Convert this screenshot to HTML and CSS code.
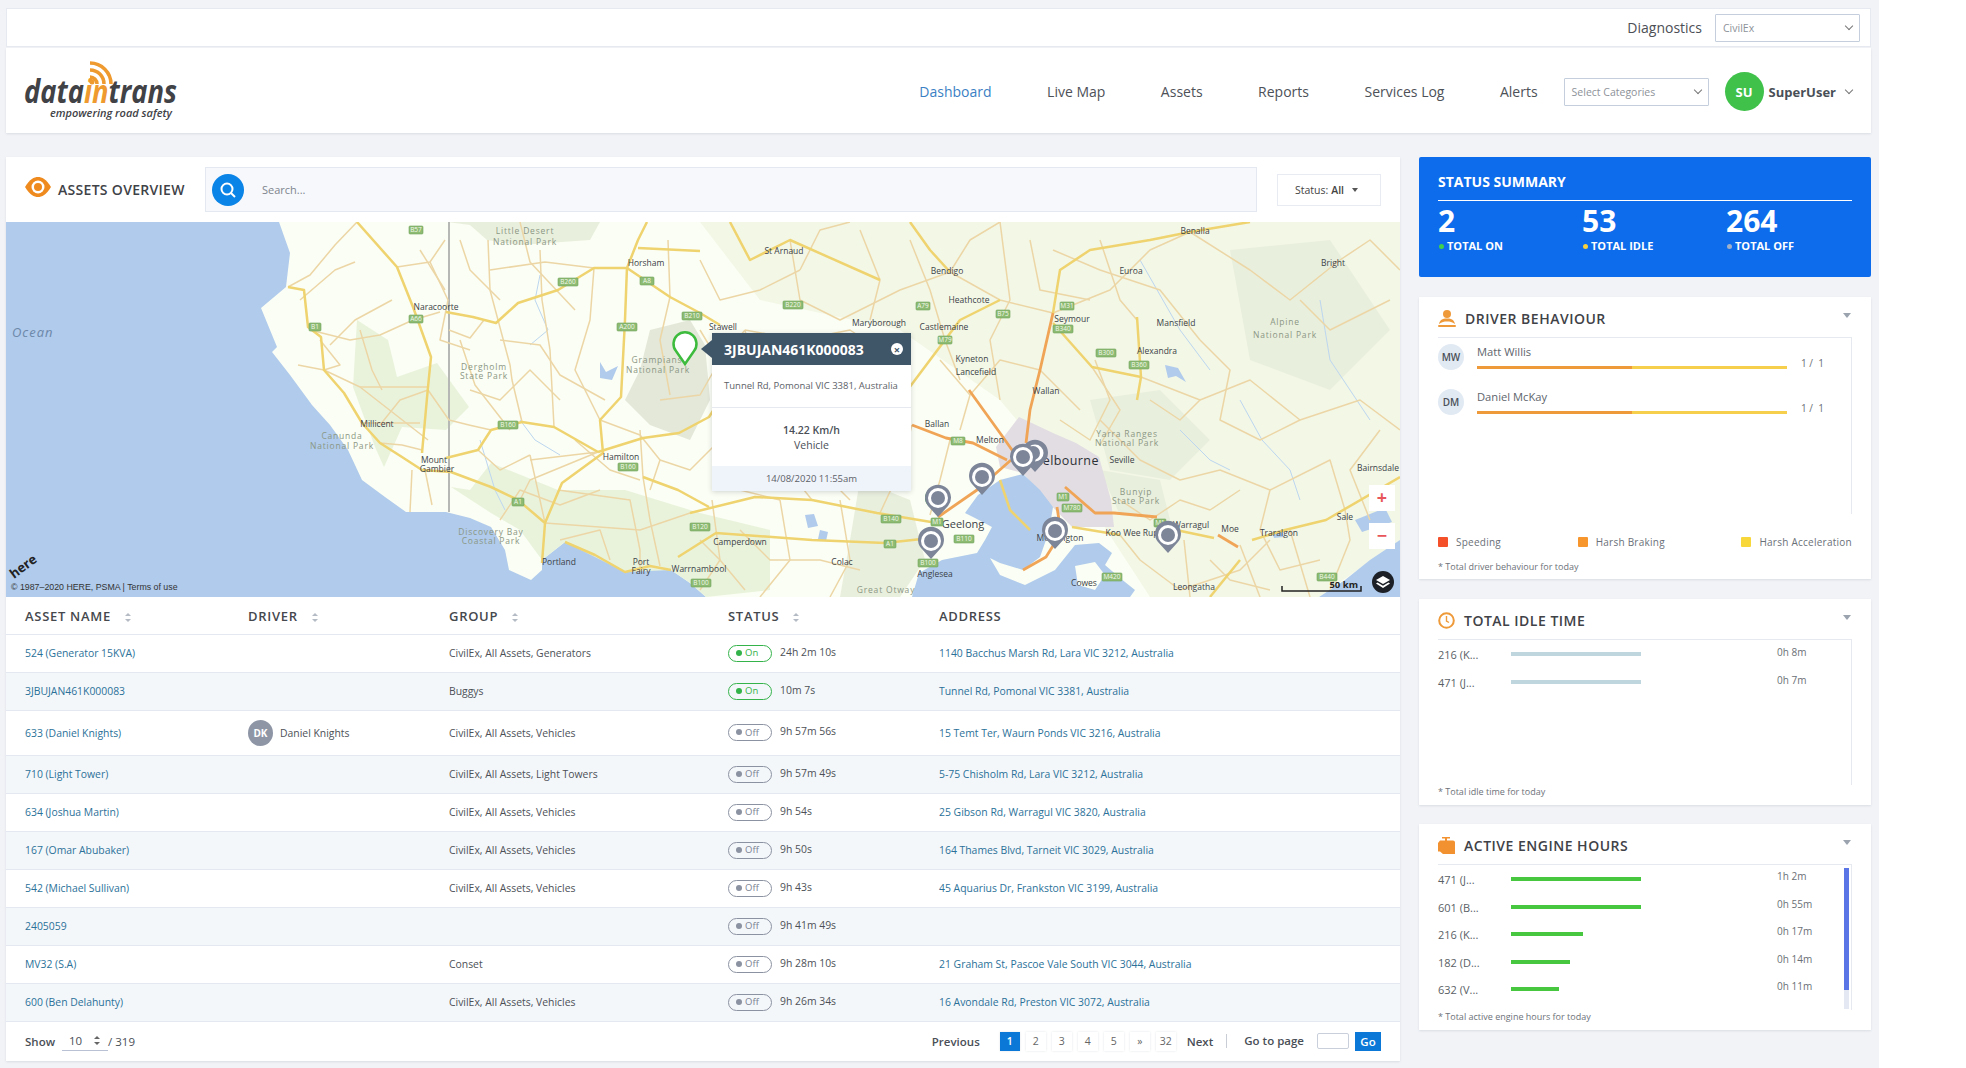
FILE: index.html
```html
<!DOCTYPE html>
<html lang="en">
<head>
    <meta charset="UTF-8">
    <title>Dataintrans Dashboard</title>
    <link rel="stylesheet" href="styles.css">
</head>
<body>
<div class="page">

    <div class="topbar">
        <span class="diag">Diagnostics</span>
        <div class="selectbox company">CivilEx<i class="chev"></i></div>
    </div>

    <div class="navbar">
        <svg class="logo" width="160" height="62" viewBox="0 0 160 62">
            <g class="wifi">
                <path d="M66 17a7 7 0 0 1 7 7"/>
                <path d="M66 10a14 14 0 0 1 14 14"/>
                <path d="M66 3a21 21 0 0 1 21 21"/>
            </g>
            <circle cx="68" cy="22" r="2.5" fill="#ee9a2e"/>
            <text class="logo-word" x="0" y="43" textLength="153" lengthAdjust="spacingAndGlyphs">data<tspan fill="#ee9a2e">in</tspan>trans</text>
            <text class="logo-tag" x="26" y="57" textLength="122" lengthAdjust="spacingAndGlyphs">empowering road safety</text>
        </svg>
        <nav class="nav">
            <a class="active">Dashboard</a>
            <a>Live Map</a>
            <a>Assets</a>
            <a>Reports</a>
            <a>Services Log</a>
            <a>Alerts</a>
        </nav>
        <div class="selectbox cats">Select Categories<i class="chev"></i></div>
        <div class="avatar">SU</div>
        <span class="username">SuperUser</span>
        <i class="chev user-chev"></i>
    </div>

    <div class="main">
        <div class="overview">
            <div class="ov-head">
                <svg class="ov-eye" width="26" height="20" viewBox="0 0 26 20">
                    <path d="M0 10C5 2 9 0 13 0s8 2 13 10c-5 8-9 10-13 10S5 18 0 10z" fill="#ee8a1e"/>
                    <circle cx="13" cy="10" r="6.5" fill="#fff"/>
                    <circle cx="13" cy="10" r="4" fill="#ee8a1e"/>
                </svg>
                <h2 class="ov-title">ASSETS OVERVIEW</h2>
                <div class="search">
                    <span class="search-btn">
                        <svg width="18" height="18" viewBox="0 0 18 18" fill="none" stroke="#fff" stroke-width="2">
                            <circle cx="8" cy="8" r="5.5"/><path d="M12 12l4 4"/>
                        </svg>
                    </span>
                    <span class="search-text">Search...</span>
                </div>
                <div class="status-filter">Status: <b>All</b><i class="caret"></i></div>
            </div>

            <div class="map">
                <svg class="map-svg" width="1394" height="375" viewBox="6 222 1394 375">
                    <rect class="sea" x="6" y="222" width="1394" height="375"/>
                    <path class="land" d="M279,222 290,253 286,287 261,308 277,347 272,352 290,375 312,405 330,425 348,450 362,480 385,497 406,512 446,512 470,518 491,527 505,550 509,570 531,580 542,570 542,560 565,542 595,555 625,572 650,566 671,570 690,583 706,597 1400,597 1400,222Z"/>

                    <path class="east" d="M700,222H1400V540L1319,597H1150L1100,520 1000,400 900,330 760,300Z"/>
                    <path class="park" d="M357,320 388,340 397,377 437,363 469,407 446,430 402,427 384,467 375,447 353,387Z"/>
                    <path class="park" d="M491,463 558,490 625,490 700,513 770,530 770,590 706,597 690,583 671,570 625,572 565,542 542,560 520,530 491,513 451,487 470,490Z"/>
                    <path class="reserve" d="M447,222H600L590,240 520,245 487,240 470,225Z"/>
                    <path class="reserve dark" d="M650,330 690,320 705,345 710,400 690,440 650,425 625,400 640,370Z"/>
                    <path class="reserve" d="M860,480 910,500 925,560 900,597H840L850,540Z"/>
                    <path class="reserve" d="M1090,400 1160,390 1210,440 1170,480 1110,470Z"/>
                    <path class="reserve" d="M1230,250 1330,240 1390,330 1330,390 1250,360Z"/>
                    <path class="reserve" d="M1100,470 1160,480 1170,520 1120,515Z"/>
                    <path class="urban" d="M996,447 1019,417 1053,433 1076,443 1099,457 1111,500 1114,527 1072,527 1046,500 1023,473 1000,467Z"/>

                    <path class="sea" d="M912,597 919,573 942,560 977,553 985,540 992,527 975,518 965,513 978,495 1000,480 1023,474 1040,490 1053,507 1050,525 1046,540 1040,557 1023,570 1000,563 990,558 1000,575 1025,585 1055,570 1075,545 1099,543 1112,553 1105,565 1120,578 1135,590 1130,597Z"/>
                    <path class="sea" d="M1319,597 1345,580 1370,560 1400,540V597Z"/>
                    <path class="land" d="M1075,566 1095,562 1105,575 1095,590 1078,585Z"/>
                    <path class="sea" d="M1355,520 1385,508 1392,522 1362,532Z"/>
                    <path class="sea" d="M600,362 606,372 618,366 612,380 600,378Z"/>
                    <path class="sea" d="M805,515 814,514 818,526 808,528Z"/>
                    <path class="sea" d="M820,530 828,532 826,541 818,539Z"/>
                    <path class="sea" d="M1165,365 1178,368 1186,382 1176,376 1168,378Z"/>
                    <path class="sea" d="M1272,532 1282,530 1284,537 1274,538Z"/>

                    <g class="river">
                        <path d="M540,275 535,300 548,330 530,345"/>
                        <path d="M1240,400 1262,440 1290,470 1300,500"/>
                        <path d="M1180,430 1210,460 1230,470"/>
                        <path d="M1320,300 1330,360 1370,420"/>
                        <path d="M520,420 535,440 560,455"/>
                        <path d="M480,440 495,490 505,510"/>
                        <path d="M1140,260 1180,330 1210,370"/>
                    </g>

                    <line class="border" x1="449" y1="222" x2="449" y2="512"/>

                    <g class="rd-t">
                        <path d="M357,222 335,245 310,275 288,287"/>
                        <path d="M310,330 350,340 380,335 413,320 440,312"/>
                        <path d="M320,340 340,365 324,370 298,365"/>
                        <path d="M324,370 360,387 428,440"/>
                        <path d="M360,330 372,370 382,390"/>
                        <path d="M360,387H428"/>
                        <path d="M380,425 400,400 428,390 449,420 469,425 491,430"/>
                        <path d="M362,423H420"/>
                        <path d="M380,443 402,445 422,450"/>
                        <path d="M412,470 410,512"/>
                        <path d="M425,470 432,505"/>
                        <path d="M449,330 470,338 484,320"/>
                        <path d="M460,340 475,385 510,430"/>
                        <path d="M488,240 490,290 510,365 512,380 522,422"/>
                        <path d="M500,340 540,345 560,375 605,400"/>
                        <path d="M540,250 542,300 550,350 554,427"/>
                        <path d="M490,270 545,262 594,268"/>
                        <path d="M594,268 590,320 575,370 600,420"/>
                        <path d="M530,460 598,452 530,480 520,500"/>
                        <path d="M530,455 540,500 545,523"/>
                        <path d="M558,490 630,500 640,550 640,572"/>
                        <path d="M640,430 643,477 650,520 660,566"/>
                        <path d="M545,523 640,530 690,513"/>
                        <path d="M600,420 640,435 660,460 650,490"/>
                        <path d="M660,400 700,395 720,360 745,330"/>
                        <path d="M668,240 670,297 660,340 670,395"/>
                        <path d="M700,260 720,300 760,290 800,270"/>
                        <path d="M745,330 800,340 850,330 880,350"/>
                        <path d="M745,330 760,400 780,460 812,500"/>
                        <path d="M712,500 720,560 745,590"/>
                        <path d="M780,500 790,560 760,597"/>
                        <path d="M840,500 850,560 830,597"/>
                        <path d="M790,240 800,300 840,320 900,290 950,272"/>
                        <path d="M910,240 930,290 945,340 960,380"/>
                        <path d="M950,272 1000,300 1053,313 1110,290 1150,250 1190,232"/>
                        <path d="M1000,222 1010,300 990,340 1000,400"/>
                        <path d="M912,425 900,470 880,513"/>
                        <path d="M950,440 940,480 930,515"/>
                        <path d="M1100,240 1120,300 1137,320"/>
                        <path d="M1190,232 1250,270 1290,300 1340,260"/>
                        <path d="M1141,377 1200,400 1250,380 1300,420 1360,400 1400,430"/>
                        <path d="M1100,420 1140,460 1180,480 1220,470 1270,490 1330,460 1345,510"/>
                        <path d="M1120,535 1140,560 1180,590 1240,570 1270,540"/>
                        <path d="M1184,540 1190,597"/>
                        <path d="M1240,545 1260,597"/>
                        <path d="M1290,530 1310,597"/>
                        <path d="M1060,420 1090,440 1110,400 1095,360"/>
                        <path d="M1345,510 1350,540 1330,590"/>
                        <path d="M300,300 335,270 355,262"/>
                        <path d="M330,345 355,320 392,300"/>
                        <path d="M397,267 430,262 445,240"/>
                        <path d="M430,262 448,300 440,340 470,350"/>
                        <path d="M420,250 445,290"/>
                        <path d="M500,300 470,270 460,240"/>
                        <path d="M520,222 530,262 575,310"/>
                        <path d="M470,390 500,400 530,370 560,400"/>
                        <path d="M478,450 500,470 530,455"/>
                        <path d="M500,520 520,490 560,505 600,490"/>
                        <path d="M575,440 610,470 640,480"/>
                        <path d="M560,540 600,530 610,560"/>
                        <path d="M660,460 690,470 720,440 760,450"/>
                        <path d="M720,400 760,430 800,420 840,440 880,430"/>
                        <path d="M700,330 730,380 780,370 820,390 860,370 900,390"/>
                        <path d="M820,340 830,400 820,470 850,500"/>
                        <path d="M880,350 870,420 850,470"/>
                        <path d="M730,440 740,490 780,500"/>
                        <path d="M740,530 770,560 820,560 860,570"/>
                        <path d="M700,540 720,560 700,590"/>
                        <path d="M860,230 880,280 870,320"/>
                        <path d="M800,270 820,230 850,222"/>
                        <path d="M950,272 970,240 1000,222"/>
                        <path d="M1030,240 1040,290 1090,300"/>
                        <path d="M1053,250 1100,270 1160,290 1200,340"/>
                        <path d="M1200,340 1230,370 1220,420 1260,440 1300,420"/>
                        <path d="M1150,400 1180,420 1200,400"/>
                        <path d="M1300,300 1330,330 1390,300"/>
                        <path d="M1340,260 1370,240 1400,270"/>
                        <path d="M1380,430 1350,470 1370,520"/>
                        <path d="M1270,490 1260,530 1280,570 1320,560"/>
                        <path d="M1120,500 1150,520 1180,500 1210,510 1240,490"/>
                        <path d="M1210,560 1230,580 1270,590"/>
                        <path d="M970,395 1000,360 1040,370 1080,410"/>
                        <path d="M940,360 970,395 960,430"/>
                        <path d="M1092,367 1120,410 1100,445"/>
                    </g>
                    <g class="rd-y">
                        <path d="M357,222 397,267 413,307 431,357 428,387 422,453"/>
                        <path d="M288,287 304,290 308,327 321,337 324,370 344,393 362,423 380,443 402,457 422,470 451,472 491,487 518,500 545,523 542,563"/>
                        <path d="M446,458 478,450 491,430 522,422 554,427 598,452"/>
                        <path d="M545,523 562,483 603,453 600,420 621,397 625,320 627,267"/>
                        <path d="M446,312 473,317 496,323 518,303 558,290 594,268 627,268 638,240 647,222"/>
                        <path d="M627,268 670,297 700,313 720,325"/>
                        <path d="M638,248 700,251"/>
                        <path d="M565,542 595,555 625,572 650,566 671,570"/>
                        <path d="M598,452 643,438 679,433 709,417 720,400"/>
                        <path d="M643,477 678,490 709,507"/>
                        <path d="M690,513 755,497 812,500 877,513 931,522"/>
                        <path d="M678,557 716,533 812,540 885,543 931,538"/>
                        <path d="M1053,323 1092,367 1141,377"/>
                        <path d="M1137,317 1141,377 1137,400"/>
                        <path d="M1176,530 1214,538"/>
                        <path d="M1252,540 1285,530 1326,520 1400,477"/>
                        <path d="M1000,480 1010,510 1030,530"/>
                        <path d="M880,350 900,400 960,320 1000,300"/>
                        <path d="M1072,527 1120,535"/>
                        <path d="M1240,560 1210,597"/>
                        <path d="M730,222 750,260 790,240 880,280"/>
                        <path d="M1053,313 1060,270 1090,250 1150,240 1190,232 1250,222"/>
                        <path d="M950,272 930,250 910,222"/>
                    </g>
                    <g class="rd-o">
                        <path d="M912,425 946,438 973,443 1007,460"/>
                        <path d="M1053,313 1040,370 1030,410 1026,443"/>
                        <path d="M969,390 1000,433 1017,457"/>
                        <path d="M938,517 977,490 1011,460"/>
                        <path d="M1065,487 1095,513 1114,513 1157,517"/>
                        <path d="M1023,570 1046,557 1061,533 1057,507"/>
                        <path d="M1218,535 1238,547"/>
                    </g>

                    <g class="ml">
                        <text x="646" y="266">Horsham</text>
                        <text x="436" y="310">Naracoorte</text>
                        <text x="377" y="427">Millicent</text>
                        <text x="434" y="463">Mount</text>
                        <text x="437" y="472">Gambier</text>
                        <text x="621" y="460">Hamilton</text>
                        <text x="559" y="565">Portland</text>
                        <text x="641" y="565">Port</text>
                        <text x="641" y="574">Fairy</text>
                        <text x="699" y="572">Warrnambool</text>
                        <text x="723" y="330">Stawell</text>
                        <text x="879" y="326">Maryborough</text>
                        <text x="944" y="330">Castlemaine</text>
                        <text x="972" y="362">Kyneton</text>
                        <text x="976" y="375">Lancefield</text>
                        <text x="1072" y="322">Seymour</text>
                        <text x="1176" y="326">Mansfield</text>
                        <text x="1157" y="354">Alexandra</text>
                        <text x="1046" y="394">Wallan</text>
                        <text x="937" y="427">Ballan</text>
                        <text x="990" y="443">Melton</text>
                        <text x="1122" y="463">Seville</text>
                        <text x="740" y="545">Camperdown</text>
                        <text x="842" y="565">Colac</text>
                        <text x="1132" y="536">Koo Wee Rup</text>
                        <text x="1191" y="528">Warragul</text>
                        <text x="1230" y="532">Moe</text>
                        <text x="1279" y="536">Traralgon</text>
                        <text x="1345" y="520">Sale</text>
                        <text x="1378" y="471">Bairnsdale</text>
                        <text x="1194" y="590">Leongatha</text>
                        <text x="1084" y="586">Cowes</text>
                        <text x="935" y="577">Anglesea</text>
                        <text x="1060" y="541">Mornington</text>
                        <text x="947" y="274">Bendigo</text>
                        <text x="969" y="303">Heathcote</text>
                        <text x="1195" y="234">Benalla</text>
                        <text x="1131" y="274">Euroa</text>
                        <text x="1333" y="266">Bright</text>
                        <text x="784" y="254">St Arnaud</text>
                    </g>
                    <g class="mp">
                        <text x="525" y="234">Little Desert</text>
                        <text x="525" y="245">National Park</text>
                        <text x="484" y="370">Dergholm</text>
                        <text x="484" y="379">State Park</text>
                        <text x="657" y="363">Grampians</text>
                        <text x="658" y="373">National Park</text>
                        <text x="342" y="439">Canunda</text>
                        <text x="342" y="449">National Park</text>
                        <text x="491" y="535">Discovery Bay</text>
                        <text x="491" y="544">Coastal Park</text>
                        <text x="1127" y="437">Yarra Ranges</text>
                        <text x="1127" y="446">National Park</text>
                        <text x="1136" y="495">Bunyip</text>
                        <text x="1136" y="504">State Park</text>
                        <text x="886" y="593">Great Otway</text>
                        <text x="1285" y="325">Alpine</text>
                        <text x="1285" y="338">National Park</text>
                    </g>
                    <text class="m-big" x="1065" y="465">Melbourne</text>
                    <text class="m-mid" x="963" y="528">Geelong</text>
                    <text class="m-ocean" x="12" y="337">Ocean</text>

                    <g class="shields">
                        <rect x="409" y="226" width="14" height="8"/>
                        <rect x="558" y="278" width="20" height="8"/>
                        <rect x="640" y="277" width="14" height="8"/>
                        <rect x="682" y="312" width="20" height="8"/>
                        <rect x="617" y="323" width="20" height="8"/>
                        <rect x="409" y="315" width="14" height="8"/>
                        <rect x="309" y="323" width="12" height="8"/>
                        <rect x="498" y="421" width="20" height="8"/>
                        <rect x="618" y="463" width="20" height="8"/>
                        <rect x="512" y="498" width="12" height="8"/>
                        <rect x="783" y="301" width="20" height="8"/>
                        <rect x="916" y="302" width="14" height="8"/>
                        <rect x="996" y="310" width="14" height="8"/>
                        <rect x="1060" y="302" width="14" height="8"/>
                        <rect x="1053" y="325" width="20" height="8"/>
                        <rect x="1096" y="349" width="20" height="8"/>
                        <rect x="1129" y="361" width="20" height="8"/>
                        <rect x="938" y="336" width="14" height="8"/>
                        <rect x="951" y="437" width="14" height="8"/>
                        <rect x="931" y="518" width="12" height="8"/>
                        <rect x="881" y="515" width="20" height="8"/>
                        <rect x="690" y="523" width="20" height="8"/>
                        <rect x="884" y="540" width="12" height="8"/>
                        <rect x="918" y="559" width="20" height="8"/>
                        <rect x="954" y="535" width="20" height="8"/>
                        <rect x="691" y="579" width="20" height="8"/>
                        <rect x="1057" y="493" width="12" height="8"/>
                        <rect x="1062" y="504" width="20" height="8"/>
                        <rect x="1102" y="573" width="20" height="8"/>
                        <rect x="1154" y="519" width="12" height="8"/>
                        <rect x="1317" y="573" width="20" height="8"/>
                    </g>
                    <g class="shield-text">
                        <text x="416" y="232">B57</text>
                        <text x="568" y="284">B260</text>
                        <text x="647" y="283">A8</text>
                        <text x="692" y="318">B210</text>
                        <text x="627" y="329">A200</text>
                        <text x="416" y="321">A66</text>
                        <text x="315" y="329">B1</text>
                        <text x="508" y="427">B160</text>
                        <text x="628" y="469">B160</text>
                        <text x="518" y="504">A1</text>
                        <text x="793" y="307">B220</text>
                        <text x="923" y="308">A79</text>
                        <text x="1003" y="316">B75</text>
                        <text x="1067" y="308">M31</text>
                        <text x="1063" y="331">B340</text>
                        <text x="1106" y="355">B300</text>
                        <text x="1139" y="367">B360</text>
                        <text x="945" y="342">M79</text>
                        <text x="958" y="443">M8</text>
                        <text x="937" y="524">M1</text>
                        <text x="891" y="521">B140</text>
                        <text x="700" y="529">B120</text>
                        <text x="890" y="546">A1</text>
                        <text x="928" y="565">B100</text>
                        <text x="964" y="541">B110</text>
                        <text x="701" y="585">B100</text>
                        <text x="1063" y="499">M1</text>
                        <text x="1072" y="510">M780</text>
                        <text x="1112" y="579">M420</text>
                        <text x="1160" y="525">M1</text>
                        <text x="1327" y="579">B440</text>
                    </g>

                    <g class="pin-green">
                        <path class="pin-shape" d="M685,364 676,351A11.5,11.5 0 1 1 694,351Z"/>
                        <circle cx="936" cy="498" r="11"/>
                    </g>
                    <g class="pin">
                        <path d="M1035,472 1025,461A13,13 0 1 1 1045,461Z"/>
                        <circle class="pin-ring" cx="1035" cy="453" r="8.5"/>
                        <circle class="pin-dot" cx="1033" cy="453" r="7"/>
                    </g>
                    <g class="pin">
                        <path d="M1023,476 1013,465A13,13 0 1 1 1033,465Z"/>
                        <circle class="pin-ring" cx="1023" cy="457" r="10"/>
                        <circle class="pin-dot" cx="1023" cy="457" r="7"/>
                    </g>
                    <g class="pin">
                        <path d="M982,495 972,484A13,13 0 1 1 992,484Z"/>
                        <circle class="pin-ring" cx="982" cy="477" r="10"/>
                        <circle class="pin-dot" cx="982" cy="477" r="7"/>
                    </g>
                    <g class="pin">
                        <path d="M938,517 928,506A13,13 0 1 1 948,506Z"/>
                        <circle class="pin-ring" cx="938" cy="498" r="10"/>
                        <circle class="pin-dot" cx="938" cy="498" r="7"/>
                    </g>
                    <g class="pin">
                        <path d="M931,559 921,548A13,13 0 1 1 941,548Z"/>
                        <circle class="pin-ring" cx="931" cy="541" r="10"/>
                        <circle class="pin-dot" cx="931" cy="541" r="7"/>
                    </g>
                    <g class="pin">
                        <path d="M1055,549 1045,538A13,13 0 1 1 1065,538Z"/>
                        <circle class="pin-ring" cx="1055" cy="531" r="10"/>
                        <circle class="pin-dot" cx="1055" cy="531" r="7"/>
                    </g>
                    <g class="pin">
                        <path d="M1168,553 1158,542A13,13 0 1 1 1178,542Z"/>
                        <circle class="pin-ring" cx="1168" cy="535" r="10"/>
                        <circle class="pin-dot" cx="1168" cy="535" r="7"/>
                    </g>

                    <text class="here" x="14" y="579" transform="rotate(-37 14 579)">here</text>
                    <text class="copyright" x="11" y="590">© 1987–2020 HERE, PSMA | Terms of use</text>
                    <path class="scale-bar" d="M1282,586V591H1361V586"/>
                    <text class="scale-text" x="1358" y="588">50 km</text>
                </svg>

                <div class="popup">
                    <div class="pop-head">
                        <span class="pop-title">3JBUJAN461K000083</span>
                        <span class="pop-close">×</span>
                    </div>
                    <div class="pop-addr">Tunnel Rd, Pomonal VIC 3381, Australia</div>
                    <div class="pop-body">
                        <b>14.22 Km/h</b>
                        <span>Vehicle</span>
                    </div>
                    <div class="pop-foot">14/08/2020 11:55am</div>
                </div>

                <div class="zoom-ctrl zoom-plus">+</div>
                <div class="zoom-ctrl zoom-minus">−</div>
                <div class="layers">
                    <svg width="14" height="12" viewBox="0 0 14 12" fill="#fff">
                        <path d="M7 0l7 4-7 4-7-4z"/>
                        <path d="M1.500 6.500L7 9.700l5.500-3.200L14 7.500 7 12 0 7.500z"/>
                    </svg>
                </div>
            </div>

            <table class="assets">
                <colgroup>
                    <col class="c-name"><col class="c-driver"><col class="c-group"><col class="c-status"><col>
                </colgroup>
                <thead>
                    <tr>
                        <th>ASSET NAME<i class="sort"></i></th>
                        <th>DRIVER<i class="sort"></i></th>
                        <th>GROUP<i class="sort"></i></th>
                        <th>STATUS<i class="sort"></i></th>
                        <th>ADDRESS</th>
                    </tr>
                </thead>
                <tbody>
                    <tr>
                        <td><a>524 (Generator 15KVA)</a></td><td></td><td>CivilEx, All Assets, Generators</td>
                        <td><span class="pill on"><i></i>On</span>24h 2m 10s</td>
                        <td><a>1140 Bacchus Marsh Rd, Lara VIC 3212, Australia</a></td>
                    </tr>
                    <tr>
                        <td><a>3JBUJAN461K000083</a></td><td></td><td>Buggys</td>
                        <td><span class="pill on"><i></i>On</span>10m 7s</td>
                        <td><a>Tunnel Rd, Pomonal VIC 3381, Australia</a></td>
                    </tr>
                    <tr class="tall">
                        <td><a>633 (Daniel Knights)</a></td>
                        <td><span class="driver"><span class="driver-av">DK</span>Daniel Knights</span></td>
                        <td>CivilEx, All Assets, Vehicles</td>
                        <td><span class="pill"><i></i>Off</span>9h 57m 56s</td>
                        <td><a>15 Temt Ter, Waurn Ponds VIC 3216, Australia</a></td>
                    </tr>
                    <tr>
                        <td><a>710 (Light Tower)</a></td><td></td><td>CivilEx, All Assets, Light Towers</td>
                        <td><span class="pill"><i></i>Off</span>9h 57m 49s</td>
                        <td><a>5-75 Chisholm Rd, Lara VIC 3212, Australia</a></td>
                    </tr>
                    <tr>
                        <td><a>634 (Joshua Martin)</a></td><td></td><td>CivilEx, All Assets, Vehicles</td>
                        <td><span class="pill"><i></i>Off</span>9h 54s</td>
                        <td><a>25 Gibson Rd, Warragul VIC 3820, Australia</a></td>
                    </tr>
                    <tr>
                        <td><a>167 (Omar Abubaker)</a></td><td></td><td>CivilEx, All Assets, Vehicles</td>
                        <td><span class="pill"><i></i>Off</span>9h 50s</td>
                        <td><a>164 Thames Blvd, Tarneit VIC 3029, Australia</a></td>
                    </tr>
                    <tr>
                        <td><a>542 (Michael Sullivan)</a></td><td></td><td>CivilEx, All Assets, Vehicles</td>
                        <td><span class="pill"><i></i>Off</span>9h 43s</td>
                        <td><a>45 Aquarius Dr, Frankston VIC 3199, Australia</a></td>
                    </tr>
                    <tr>
                        <td><a>2405059</a></td><td></td><td></td>
                        <td><span class="pill"><i></i>Off</span>9h 41m 49s</td>
                        <td></td>
                    </tr>
                    <tr>
                        <td><a>MV32 (S.A)</a></td><td></td><td>Conset</td>
                        <td><span class="pill"><i></i>Off</span>9h 28m 10s</td>
                        <td><a>21 Graham St, Pascoe Vale South VIC 3044, Australia</a></td>
                    </tr>
                    <tr>
                        <td><a>600 (Ben Delahunty)</a></td><td></td><td>CivilEx, All Assets, Vehicles</td>
                        <td><span class="pill"><i></i>Off</span>9h 26m 34s</td>
                        <td><a>16 Avondale Rd, Preston VIC 3072, Australia</a></td>
                    </tr>
                </tbody>
            </table>

            <div class="table-foot">
                <b class="show">Show</b>
                <span class="per-page">10<i class="sort dark"></i></span>
                <span class="total">/ 319</span>
                <b class="prev">Previous</b>
                <span class="pages">
                    <span class="pg active">1</span>
                    <span class="pg">2</span>
                    <span class="pg">3</span>
                    <span class="pg">4</span>
                    <span class="pg">5</span>
                    <span class="pg">»</span>
                    <span class="pg">32</span>
                </span>
                <b class="next">Next</b>
                <b class="goto">Go to page</b>
                <span class="goto-input"></span>
                <span class="go">Go</span>
            </div>
        </div>

        <div class="side">
            <div class="summary">
                <h3 class="sum-title">STATUS SUMMARY</h3>
                <div class="sum-grid">
                    <div><strong>2</strong><span><i class="dot green"></i>TOTAL ON</span></div>
                    <div><strong>53</strong><span><i class="dot yellow"></i>TOTAL IDLE</span></div>
                    <div><strong>264</strong><span><i class="dot grey"></i>TOTAL OFF</span></div>
                </div>
            </div>

            <div class="card driver-card">
                <div class="card-head">
                    <svg width="18" height="17" viewBox="0 0 18 17" fill="#ee9a3a">
                        <circle cx="9" cy="4" r="4"/>
                        <path d="M1 14c1-4 3-5.500 8-5.500s7 1.500 8 5.500c-3-2-5-2.500-8-2.500s-5 .5-8 2.500z"/>
                        <rect x="0" y="15" width="18" height="2" rx="1"/>
                    </svg>
                    <h3>DRIVER BEHAVIOUR</h3>
                    <i class="caret big"></i>
                </div>
                <div class="card-body driver-body">
                    <div class="beh-row">
                        <span class="beh-av">MW</span>
                        <div class="beh-main">
                            <div class="beh-name">Matt Willis</div>
                            <div class="beh-bar"><i></i><i></i></div>
                        </div>
                        <span class="beh-count">1 /&nbsp; 1</span>
                    </div>
                    <div class="beh-row">
                        <span class="beh-av">DM</span>
                        <div class="beh-main">
                            <div class="beh-name">Daniel McKay</div>
                            <div class="beh-bar"><i></i><i></i></div>
                        </div>
                        <span class="beh-count">1 /&nbsp; 1</span>
                    </div>
                </div>
                <div class="legend">
                    <span><i class="lg red"></i>Speeding</span>
                    <span><i class="lg orange"></i>Harsh Braking</span>
                    <span><i class="lg yellow"></i>Harsh Acceleration</span>
                </div>
                <div class="note note-driver">* Total driver behaviour for today</div>
            </div>

            <div class="card idle-card">
                <div class="card-head">
                    <svg width="17" height="17" viewBox="0 0 17 17" fill="none" stroke="#ee9a3a" stroke-width="2">
                        <circle cx="8.500" cy="8.500" r="7.300"/>
                        <path d="M8.500 4v5l2.500 1.500" stroke-width="1.400"/>
                    </svg>
                    <h3>TOTAL IDLE TIME</h3>
                    <i class="caret big"></i>
                </div>
                <div class="card-body idle-body">
                    <div class="rank"><span class="rank-l">216 (K...</span><span class="rank-bar idle" style="width:130px"></span><span class="rank-t">0h 8m</span></div>
                    <div class="rank"><span class="rank-l">471 (J...</span><span class="rank-bar idle" style="width:130px"></span><span class="rank-t">0h 7m</span></div>
                </div>
                <div class="note">* Total idle time for today</div>
            </div>

            <div class="card engine-card">
                <div class="card-head">
                    <svg width="17" height="17" viewBox="0 0 17 17" fill="#f29130">
                        <rect x="4" y="0" width="8" height="1.500"/>
                        <rect x="7" y="1" width="2" height="3"/>
                        <path d="M2 3.500h13a2 2 0 0 1 2 2V17H5l-3-2.500H0V6z"/>
                    </svg>
                    <h3>ACTIVE ENGINE HOURS</h3>
                    <i class="caret big"></i>
                </div>
                <div class="card-body engine-body">
                    <div class="rank"><span class="rank-l">471 (J...</span><span class="rank-bar active" style="width:130px"></span><span class="rank-t">1h 2m</span></div>
                    <div class="rank"><span class="rank-l">601 (B...</span><span class="rank-bar active" style="width:130px"></span><span class="rank-t">0h 55m</span></div>
                    <div class="rank"><span class="rank-l">216 (K...</span><span class="rank-bar active" style="width:72px"></span><span class="rank-t">0h 17m</span></div>
                    <div class="rank"><span class="rank-l">182 (D...</span><span class="rank-bar active" style="width:59px"></span><span class="rank-t">0h 14m</span></div>
                    <div class="rank"><span class="rank-l">632 (V...</span><span class="rank-bar active" style="width:48px"></span><span class="rank-t">0h 11m</span></div>
                    <div class="scroll-track"><div class="scroll-thumb"></div></div>
                </div>
                <div class="note">* Total active engine hours for today</div>
            </div>
        </div>
    </div>
</div>
</body>
</html>
```

FILE: styles.css
```css
* {
    box-sizing: border-box;
}
html {
    background-color: #fff;
}
body {
    margin: 0;
    font-family: 'Open Sans', sans-serif;
    color: #4a4f57;
    font-size: 11px;
}
h2, h3 {
    margin: 0;
}
i {
    font-style: normal;
}
a {
    color: #2b7199;
}
.page {
    width: 1879px;
    height: 1068px;
    overflow: hidden;
    padding: 8px 8px 0 6px;
    background-color: #f1f3f7;
}

/* header */
.topbar {
    display: flex;
    align-items: center;
    justify-content: flex-end;
    height: 39px;
    padding-right: 10px;
    background-color: #fff;
    border: 1px solid #e6e9f0;
}
.diag {
    font-size: 14px;
    color: #4c4f55;
    margin-right: 13px;
}
.selectbox {
    display: flex;
    align-items: center;
    justify-content: space-between;
    height: 28px;
    padding: 0 7px;
    font-size: 10.500px;
    color: #8d9299;
    background-color: #fff;
    border: 1px solid #c5cedd;
    border-radius: 1px;
}
.company {
    width: 145px;
}
.cats {
    width: 145px;
    margin-left: 26px;
}
.chev {
    display: block;
    width: 6px;
    height: 6px;
    margin-top: -3px;
    border-right: 1px solid #777;
    border-bottom: 1px solid #777;
    transform: rotate(45deg);
}
.navbar {
    display: flex;
    align-items: center;
    height: 85px;
    margin-top: 1px;
    padding: 2px 19px 0 18px;
    background-color: #fff;
    box-shadow: 0 1px 2px rgba(60, 70, 90, 0.12);
}
.logo {
    flex: none;
    margin-top: -2px;
    overflow: visible;
}
.wifi {
    fill: none;
    stroke: #ee9a2e;
    stroke-width: 3.500;
}
.logo-word {
    font-family: 'Open Sans', sans-serif;
    font-size: 33px;
    font-style: italic;
    font-weight: 700;
    fill: #414246;
}
.logo-tag {
    font-family: 'Open Sans', sans-serif;
    font-size: 11px;
    font-style: italic;
    font-weight: 600;
    fill: #414246;
}
.nav {
    display: flex;
    gap: 55.500px;
    margin-left: auto;
    font-size: 14px;
}
.nav a {
    color: #4d5158;
}
.nav a.active {
    color: #3b7fc4;
}
.avatar {
    display: flex;
    align-items: center;
    justify-content: center;
    width: 39px;
    height: 39px;
    margin-left: 16px;
    border-radius: 50%;
    background-color: #3fc14a;
    color: #fff;
    font-size: 13px;
    font-weight: 700;
}
.username {
    margin-left: 5px;
    font-size: 13px;
    font-weight: 700;
    color: #4a4f57;
}
.user-chev {
    margin-left: 10px;
}

.main {
    display: flex;
    gap: 19px;
    margin-top: 24px;
}

/* assets overview */
.overview {
    flex: none;
    width: 1394px;
    height: 904px;
    background-color: #fff;
    box-shadow: 0 1px 2px rgba(60, 70, 90, 0.12);
}
.ov-head {
    display: flex;
    align-items: center;
    height: 65px;
    padding: 0 19px;
}
.ov-eye {
    margin-top: -6px;
}
.ov-title {
    width: 147px;
    margin-left: 7px;
    font-size: 14px;
    font-weight: 600;
    letter-spacing: 0.3px;
    white-space: nowrap;
    color: #3f4247;
}
.search {
    display: flex;
    align-items: center;
    width: 1052px;
    height: 45px;
    padding-left: 6px;
    background-color: #f6f8fc;
    border: 1px solid #e3e8f1;
}
.search-btn {
    display: flex;
    align-items: center;
    justify-content: center;
    width: 32px;
    height: 32px;
    border-radius: 50%;
    background-color: #0a84e6;
}
.search-text {
    margin-left: 18px;
    color: #7f858e;
}
.status-filter {
    display: flex;
    align-items: center;
    justify-content: center;
    width: 104px;
    height: 32px;
    margin-left: 20px;
    padding-right: 5px;
    font-size: 10.500px;
    color: #444;
    background-color: #fff;
    border: 1px solid #e8ebf1;
}
.status-filter b {
    font-weight: 600;
    margin-left: 3px;
}
.caret {
    display: block;
    width: 0;
    height: 0;
    margin-left: 8px;
    border-left: 3.500px solid transparent;
    border-right: 3.500px solid transparent;
    border-top: 4px solid #555;
}
.caret.big {
    margin-left: auto;
    margin-top: -6px;
    margin-right: 1px;
    border-left-width: 4.500px;
    border-right-width: 4.500px;
    border-top: 5px solid #9aa3ae;
}

/* map */
.map {
    position: relative;
    height: 376px;
    overflow: hidden;
}
.map-svg {
    display: block;
    font-family: 'Open Sans', sans-serif;
}
.sea {
    fill: #b0cbec;
}
.land {
    fill: #fbfef4;
}
.east {
    fill: #f3f7e6;
}
.park {
    fill: #e9f3dc;
}
.reserve {
    fill: #e9efdd;
}
.reserve.dark {
    fill: #e3e8d9;
}
.urban {
    fill: #e2dde2;
}
.border {
    stroke: #b5b8b5;
    stroke-width: 2;
}
.rd-t, .rd-y, .rd-o, .river {
    fill: none;
    stroke-linejoin: round;
}
.river {
    stroke: #bcd6f0;
    stroke-width: 1;
}
.rd-t {
    stroke: #ecd6a6;
    stroke-width: 1.500;
}
.rd-y {
    stroke: #efd36f;
    stroke-width: 2.500;
}
.rd-o {
    stroke: #f0a456;
    stroke-width: 2.800;
}
.ml text {
    font-size: 8.500px;
    text-anchor: middle;
    fill: #3c4248;
}
.mp text {
    font-size: 8.500px;
    letter-spacing: 0.8px;
    text-anchor: middle;
    fill: #8b9784;
}
.m-big {
    font-size: 12.500px;
    letter-spacing: 0.4px;
    text-anchor: middle;
    fill: #2c3036;
}
.m-mid {
    font-size: 11px;
    text-anchor: middle;
    fill: #3c4248;
}
.m-ocean {
    font-size: 13px;
    font-style: italic;
    letter-spacing: 1px;
    fill: #6d88a9;
}
.shields rect {
    fill: #8dbb72;
    stroke: #6fa45a;
    stroke-width: 0.600;
    rx: 1px;
}
.shield-text text {
    font-size: 6.500px;
    text-anchor: middle;
    fill: #f3f8ec;
}
.pin path {
    fill: #7d8699;
}
.pin-ring {
    fill: #fff;
}
.pin-dot {
    fill: #7d8699;
}
.pin-shape {
    fill: #fff;
    stroke: #3dbb3d;
    stroke-width: 2.500;
}
.pin-green circle {
    fill: #3f9b4e;
}
.here {
    font-size: 13px;
    font-weight: 700;
    fill: #222;
}
.copyright {
    font-family: 'Liberation Sans', sans-serif;
    font-size: 8.800px;
    fill: #333;
}
.scale-bar {
    fill: none;
    stroke: #222;
    stroke-width: 1.500;
}
.scale-text {
    font-size: 9.500px;
    font-weight: 700;
    text-anchor: end;
    fill: #222;
}
.popup {
    position: absolute;
    left: 706px;
    top: 111px;
    width: 199px;
    height: 158px;
    background-color: #fff;
    box-shadow: 0 1px 5px rgba(40, 50, 70, 0.2);
    display: flex;
    flex-direction: column;
}
.popup::before {
    content: "";
    position: absolute;
    left: -11px;
    top: 7px;
    border-top: 9px solid transparent;
    border-bottom: 9px solid transparent;
    border-right: 11px solid #3f5568;
}
.pop-head {
    display: flex;
    align-items: center;
    justify-content: space-between;
    height: 32px;
    padding: 0 8px 0 12px;
    background-color: #3f5568;
}
.pop-title {
    font-size: 14px;
    font-weight: 700;
    color: #fff;
}
.pop-close {
    display: flex;
    align-items: center;
    justify-content: center;
    width: 12px;
    height: 12px;
    border-radius: 50%;
    background-color: #fff;
    color: #3f5568;
    font-size: 11px;
    font-weight: 700;
    line-height: 1;
}
.pop-addr {
    height: 43px;
    padding: 14px 0 0 12px;
    font-size: 9.500px;
    color: #5c6168;
    border-bottom: 1px solid #e6e9ef;
}
.pop-body {
    display: flex;
    flex-direction: column;
    align-items: center;
    justify-content: center;
    flex: 1;
    gap: 1px;
    font-size: 10.500px;
    color: #4a4f57;
}
.pop-body b {
    font-weight: 600;
}
.pop-foot {
    height: 25px;
    line-height: 25px;
    text-align: center;
    font-size: 9.500px;
    color: #5c6168;
    background-color: #eff3fa;
}
.zoom-ctrl {
    position: absolute;
    left: 1363px;
    width: 26px;
    height: 26px;
    background-color: #fff;
    color: #e8555a;
    font-size: 18px;
    font-weight: 700;
    line-height: 24px;
    text-align: center;
}
.zoom-plus {
    top: 263px;
}
.zoom-minus {
    top: 301px;
}
.layers {
    position: absolute;
    left: 1366px;
    top: 349px;
    width: 22px;
    height: 22px;
    display: flex;
    align-items: center;
    justify-content: center;
    border-radius: 50%;
    background-color: #1c2026;
}

/* table */
.assets {
    width: 100%;
    border-collapse: collapse;
    table-layout: fixed;
    font-size: 10.400px;
}
.c-name {
    width: 242px;
}
.c-driver {
    width: 201px;
}
.c-group {
    width: 279px;
}
.c-status {
    width: 211px;
}
.assets th {
    height: 36px;
    padding: 0;
    text-align: left;
    font-size: 13px;
    font-weight: 600;
    letter-spacing: 0.7px;
    color: #45484d;
    border-bottom: 1px solid #e4e9f1;
}
.assets td {
    height: 38px;
    padding: 0;
    white-space: nowrap;
    color: #4d5157;
    border-bottom: 1px solid #e4e9f1;
}
.assets tr.tall td {
    height: 45px;
}
.assets tbody tr:nth-child(even) {
    background-color: #f4f7fa;
}
.assets th:first-child, .assets td:first-child {
    padding-left: 19px;
}
.sort {
    display: inline-block;
    position: relative;
    width: 6px;
    height: 9px;
    margin-left: 14px;
    vertical-align: -1px;
}
.sort::before, .sort::after {
    content: "";
    position: absolute;
    left: 0;
    border-left: 3px solid transparent;
    border-right: 3px solid transparent;
}
.sort::before {
    top: 0;
    border-bottom: 3.500px solid #b4bbc5;
}
.sort::after {
    bottom: 0;
    border-top: 3.500px solid #b4bbc5;
}
.sort.dark::before {
    border-bottom-color: #666;
}
.sort.dark::after {
    border-top-color: #666;
}
.pill {
    display: inline-flex;
    align-items: center;
    width: 44px;
    height: 17px;
    margin-right: 8px;
    padding: 0 0 1px 7px;
    font-size: 9.500px;
    color: #7b8394;
    border: 1px solid #8b92a1;
    border-radius: 9px;
    vertical-align: middle;
}
.pill i {
    width: 6px;
    height: 6px;
    margin-right: 3px;
    border-radius: 50%;
    background-color: #8b92a1;
}
.pill.on {
    color: #34b34a;
    border-color: #34b34a;
}
.pill.on i {
    background-color: #34b34a;
}
.driver {
    display: flex;
    align-items: center;
    gap: 7px;
}
.driver-av {
    display: flex;
    align-items: center;
    justify-content: center;
    width: 25px;
    height: 26px;
    border-radius: 50%;
    background-color: #8e96a6;
    color: #fff;
    font-size: 10px;
    font-weight: 700;
}
.table-foot {
    display: flex;
    align-items: center;
    height: 39px;
    padding: 0 19px;
    font-size: 11.500px;
    color: #4a4f57;
}
.table-foot b {
    font-weight: 600;
}
.per-page {
    display: flex;
    align-items: center;
    width: 46px;
    height: 20px;
    margin-left: 7px;
    padding-left: 7px;
    border-bottom: 1px solid #b9c2d4;
}
.per-page .sort {
    margin-left: 12px;
}
.total {
    margin-right: auto;
}
.pages {
    display: flex;
    gap: 6px;
    margin-left: 20px;
}
.pg {
    width: 20px;
    height: 19px;
    line-height: 19px;
    text-align: center;
    font-size: 10.500px;
    color: #666;
    box-shadow: 0 0 2px rgba(60, 70, 90, 0.15);
}
.pg.active {
    background-color: #0b78d8;
    color: #fff;
    font-weight: 600;
}
.next {
    margin-left: 11px;
}
.goto {
    margin-left: 13px;
    padding-left: 17px;
    border-left: 1px solid #c9ced6;
    line-height: 14px;
}
.goto-input {
    width: 32px;
    height: 16px;
    margin-left: 13px;
    background-color: #fff;
    border: 1px solid #c9d0db;
    border-radius: 2px;
}
.go {
    width: 26px;
    height: 19px;
    margin-left: 6px;
    line-height: 19px;
    text-align: center;
    background-color: #0b78d8;
    color: #fff;
    font-weight: 600;
}

/* side column */
.side {
    flex: none;
    width: 452px;
    display: flex;
    flex-direction: column;
}
.summary {
    height: 120px;
    padding: 16px 19px 0;
    color: #fff;
    background-color: #0c6ceb;
    border-radius: 2px;
}
.sum-title {
    height: 28px;
    font-size: 14px;
    font-weight: 700;
    line-height: 18px;
    border-bottom: 1px solid #fff;
}
.sum-grid {
    display: grid;
    grid-template-columns: 144px 144px 1fr;
}
.sum-grid strong {
    display: block;
    font-size: 30px;
    font-weight: 700;
    line-height: 39px;
}
.sum-grid span {
    display: flex;
    align-items: center;
    font-size: 11px;
    font-weight: 700;
    line-height: 12px;
}
.dot {
    width: 5px;
    height: 5px;
    margin: 0 3px 0 1px;
    border-radius: 50%;
}
.dot.green {
    background-color: #3fd24a;
}
.dot.yellow {
    background-color: #f7d23e;
}
.dot.grey {
    background-color: #9fb0c8;
}
.card {
    padding: 0 19px;
    background-color: #fff;
    box-shadow: 0 1px 2px rgba(60, 70, 90, 0.12);
}
.driver-card {
    height: 282px;
    margin-top: 20px;
}
.idle-card {
    height: 206px;
    margin-top: 20px;
}
.engine-card {
    height: 206px;
    margin-top: 19px;
}
.card-head {
    display: flex;
    align-items: center;
    height: 41px;
    padding-top: 2px;
    gap: 9px;
    border-bottom: 1px solid #e6e9f0;
}
.card-head h3 {
    font-size: 14px;
    font-weight: 600;
    letter-spacing: 0.5px;
    color: #3f4247;
}
.card-body {
    position: relative;
    border-right: 1px solid #e6e9f0;
}
.driver-body {
    height: 176px;
    padding-top: 6px;
}
.idle-body {
    height: 145px;
}
.engine-body {
    height: 145px;
}
.beh-row {
    display: flex;
    height: 45px;
}
.beh-av {
    display: flex;
    align-items: center;
    justify-content: center;
    flex: none;
    width: 26px;
    height: 26px;
    border-radius: 50%;
    background-color: #e1e9f3;
    font-size: 10px;
    font-weight: 600;
    color: #4a5058;
}
.beh-main {
    width: 310px;
    margin-left: 13px;
}
.beh-name {
    height: 22px;
    line-height: 15px;
    font-size: 11.200px;
    color: #60656c;
}
.beh-bar {
    display: flex;
    height: 3px;
}
.beh-bar i {
    flex: 1;
    background-color: #f6d04d;
}
.beh-bar i:first-child {
    background-color: #ee9a3a;
}
.beh-count {
    margin: 12px 0 0 14px;
    font-size: 10px;
    color: #6a6f76;
}
.legend {
    display: flex;
    justify-content: space-between;
    margin-top: 21px;
    font-size: 10px;
    letter-spacing: 0.25px;
    color: #6a7078;
}
.legend span {
    display: flex;
    align-items: center;
}
.lg {
    width: 10px;
    height: 10px;
    margin-right: 8px;
    border-radius: 1px;
}
.lg.red {
    background-color: #f4512a;
}
.lg.orange {
    background-color: #f7962c;
}
.lg.yellow {
    background-color: #f8d73a;
}
.note {
    font-size: 9px;
    line-height: 14px;
    color: #6d7279;
}
.note-driver {
    margin-top: 11px;
}
.rank {
    display: flex;
    align-items: flex-start;
    height: 27.500px;
}
.rank-l {
    flex: none;
    width: 73px;
    margin-top: 7px;
    font-size: 11px;
    line-height: 15px;
    color: #5a5f66;
}
.rank-bar {
    flex: none;
    height: 4px;
    margin-top: 12px;
}
.rank-bar.idle {
    background-color: #bfd6de;
}
.rank-bar.active {
    background-color: #47c63f;
}
.rank-t {
    margin-top: 4px;
    margin-left: auto;
    width: 74px;
    font-size: 10px;
    line-height: 15px;
    color: #6a6f76;
}
.idle-body .rank-t {
    margin-top: 5px;
}
.scroll-track {
    position: absolute;
    right: 2px;
    top: 3px;
    width: 5px;
    height: 141px;
    background-color: #e4e8f3;
}
.scroll-thumb {
    height: 122px;
    background-color: #5a75e6;
}
```
